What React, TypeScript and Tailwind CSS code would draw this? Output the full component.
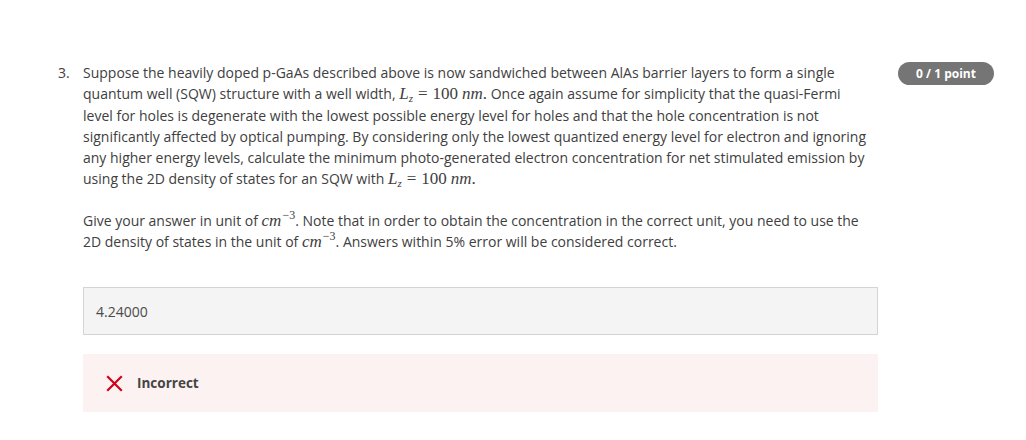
import React from "react";

const SERIF = '"Liberation Serif", "DejaVu Serif", serif';

const M = ({ children }: { children: React.ReactNode }) => (
  <span className="italic text-[17px] leading-[12px]" style={{ fontFamily: SERIF }}>{children}</span>
);
const N = ({ children }: { children: React.ReactNode }) => (
  <span className="text-[17px] leading-[12px]" style={{ fontFamily: SERIF }}>{children}</span>
);

const Lz = () => (
  <span className="whitespace-nowrap leading-[12px]">
    <M>L</M>
    <span className="italic text-[11px] leading-[10px] relative top-[3px]" style={{ fontFamily: SERIF }}>z</span>
    <N><span className="inline-block mx-[5px] leading-[12px]">=</span>100</N>
    <span className="inline-block w-[4px] leading-[12px]" />
    <M>nm</M>
    <N>.</N>
  </span>
);

const Cm = () => (
  <span className="whitespace-nowrap leading-[12px]">
    <M>cm</M>
    <span className="text-[12px] leading-[10px] relative top-[-7px] ml-[1px]" style={{ fontFamily: SERIF }}>−3</span>
  </span>
);

export default function App() {
  return (
    <div className="w-[1026px] h-[440px] bg-white text-[#404040] text-[14px]" style={{ fontFamily: '"Open Sans", sans-serif' }}>
      <div className="flex pt-[62px]">
        <div className="w-[58px] shrink-0" />
        <div className="w-[25px] shrink-0 leading-[21.3px]">3.</div>
        <div className="w-[795px] shrink-0">
          <p className="leading-[21.3px] pr-[5px]">
            Suppose the heavily doped p-GaAs described above is now sandwiched between AlAs barrier layers to form a single quantum well (SQW) structure with a well width, <Lz /> Once again assume for simplicity that the quasi-Fermi level for holes is degenerate with the lowest possible energy level for holes and that the hole concentration is not significantly affected by optical pumping. By considering only the lowest quantized energy level for electron and ignoring any higher energy levels, calculate the minimum photo-generated electron concentration for net stimulated emission by using the 2D density of states for an SQW with <Lz />
          </p>
          <p className="leading-[21.3px] mt-[20px] pr-[5px]">
            Give your answer in unit of <Cm />. Note that in order to obtain the concentration in the correct unit, you need to use the 2D density of states in the unit of <Cm />. Answers within 5% error will be considered correct.
          </p>
          <div className="mt-[35px] h-[48px] border border-[#d4d4d4] bg-[#f4f4f4] flex items-center px-[12px] text-[14px] text-[#4a4a4a]">
            4.24000
          </div>
          <div className="mt-[19px] h-[58px] bg-[#fcf2f2] flex items-center pl-[23px]">
            <svg width="17" height="17" viewBox="0 0 17 17" className="shrink-0">
              <path d="M2 2 L15 15 M15 2 L2 15" stroke="#d0021b" strokeWidth="2.2" strokeLinecap="square" />
            </svg>
            <span className="ml-[14px] font-bold text-[13.5px] text-[#444]">Incorrect</span>
          </div>
        </div>
        <div className="ml-[20px]">
          <div className="w-[96px] h-[23px] rounded-full bg-[#757575] text-white font-bold text-[12px] flex items-center justify-center">
            0 / 1 point
          </div>
        </div>
      </div>
    </div>
  );
}
